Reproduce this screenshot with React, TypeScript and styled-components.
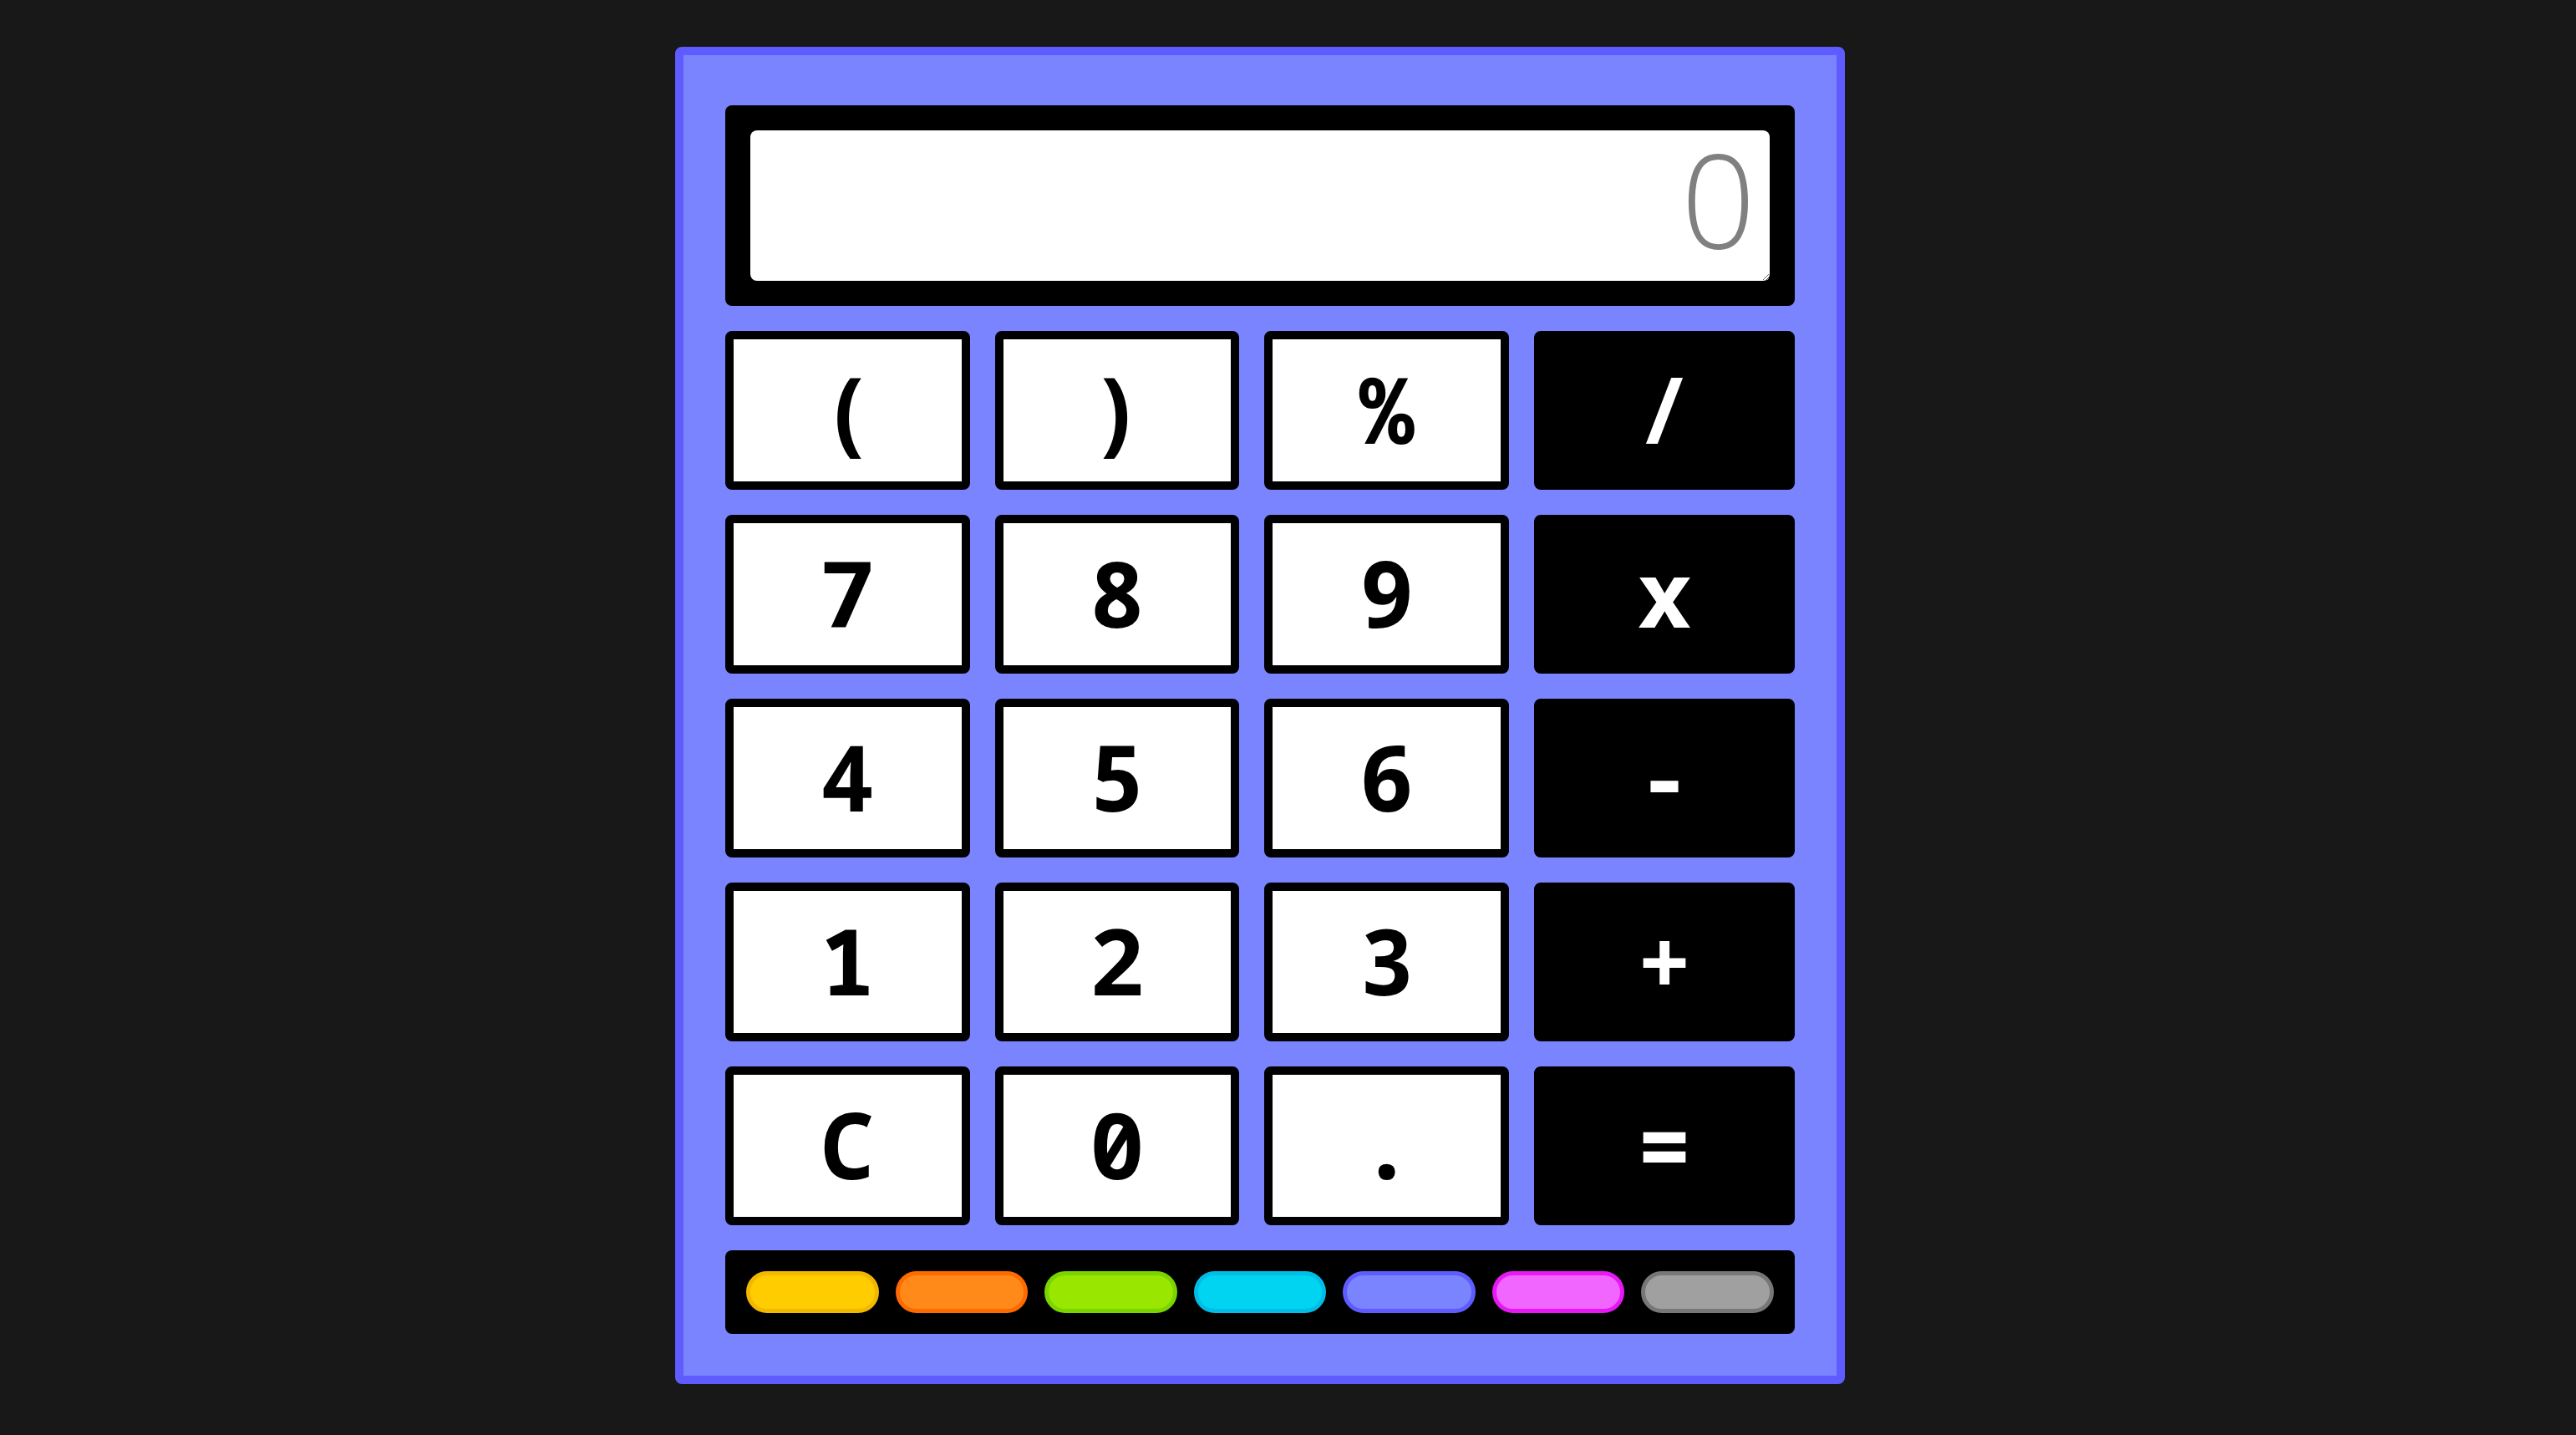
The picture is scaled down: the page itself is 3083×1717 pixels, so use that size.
import React from "react";
import styled, { createGlobalStyle } from "styled-components";

const GlobalStyle = createGlobalStyle`
  html, body {
    margin: 0;
    padding: 0;
    background: #181818;
  }
  body {
    font-family: "Noto Sans Mono", "DejaVu Sans Mono", monospace;
  }
`;

const Page = styled.main`
  min-height: 100vh;
  box-sizing: border-box;
  padding: 56px 0 0 808px;
  display: flex;
  align-items: flex-start;
`;

const Calculator = styled.section`
  box-sizing: border-box;
  width: 1400px;
  background: #7a84ff;
  border: 10px solid #5f5cff;
  border-radius: 8px;
  padding: 60px 50px 50px;
  display: flex;
  flex-direction: column;
  gap: 30px;
`;

const Screen = styled.div`
  background: #000;
  border-radius: 8px;
  padding: 30px;
  display: flex;
`;

const Display = styled.textarea`
  box-sizing: border-box;
  width: 100%;
  height: 180px;
  border: none;
  outline: none;
  border-radius: 8px;
  background: #fff;
  color: #000;
  text-align: right;
  font-family: "Open Sans", sans-serif;
  font-weight: 300;
  font-size: 156px;
  line-height: 1;
  padding: 3px 17px 0;
  resize: both;
  &::placeholder {
    color: #808080;
    opacity: 1;
  }
`;

const Keypad = styled.div`
  display: grid;
  grid-template-columns: repeat(3, 1fr) 312px;
  grid-auto-rows: 190px;
  gap: 30px;
`;

const Key = styled.button<{ $op?: boolean }>`
  box-sizing: border-box;
  margin: 0;
  padding: 0 0 6px;
  border: 10px solid #000;
  border-radius: 8px;
  background: ${(p) => (p.$op ? "#000" : "#fff")};
  color: ${(p) => (p.$op ? "#fff" : "#000")};
  font-family: "Noto Sans Mono", "DejaVu Sans Mono", monospace;
  font-weight: 700;
  font-size: 110px;
  line-height: 1;
  display: flex;
  align-items: center;
  justify-content: center;
  cursor: pointer;
`;

const ThemeBar = styled.div`
  height: 100px;
  box-sizing: border-box;
  background: #000;
  border-radius: 8px;
  padding: 25px;
  display: flex;
  gap: 20px;
`;

const Swatch = styled.button<{ $fill: string; $edge: string }>`
  flex: 1;
  margin: 0;
  padding: 0;
  box-sizing: border-box;
  height: 50px;
  border-radius: 25px;
  border: 5px solid ${(p) => p.$edge};
  background: ${(p) => p.$fill};
  cursor: pointer;
`;

const keys: { label: string; op?: boolean }[] = [
  { label: "(" },
  { label: ")" },
  { label: "%" },
  { label: "/", op: true },
  { label: "7" },
  { label: "8" },
  { label: "9" },
  { label: "x", op: true },
  { label: "4" },
  { label: "5" },
  { label: "6" },
  { label: "-", op: true },
  { label: "1" },
  { label: "2" },
  { label: "3" },
  { label: "+", op: true },
  { label: "C" },
  { label: "0" },
  { label: "." },
  { label: "=", op: true },
];

const swatches = [
  { fill: "#ffcc00", edge: "#f2b800" },
  { fill: "#ff8a1a", edge: "#ff6a00" },
  { fill: "#99e600", edge: "#7ad400" },
  { fill: "#00d4f0", edge: "#00bde6" },
  { fill: "#7a84ff", edge: "#5f5cff" },
  { fill: "#f066ff", edge: "#e619f5" },
  { fill: "#a0a0a0", edge: "#777777" },
];

export default function App() {
  return (
    <>
      <GlobalStyle />
      <Page>
        <Calculator>
          <Screen>
            <Display placeholder="0" />
          </Screen>
          <Keypad>
            {keys.map((k) => (
              <Key key={k.label} $op={k.op}>
                {k.label}
              </Key>
            ))}
          </Keypad>
          <ThemeBar>
            {swatches.map((s) => (
              <Swatch key={s.fill} $fill={s.fill} $edge={s.edge} />
            ))}
          </ThemeBar>
        </Calculator>
      </Page>
    </>
  );
}
